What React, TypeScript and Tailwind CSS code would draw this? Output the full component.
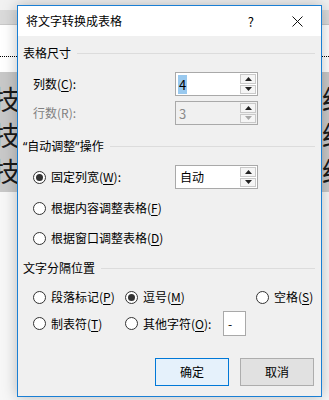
import React from 'react';

const font = { fontFamily: '"Noto Sans CJK SC", "Noto Sans", sans-serif' };

function U({ children }: { children: React.ReactNode }) {
  return <span className="underline underline-offset-2">{children}</span>;
}

function Radio({ checked }: { checked?: boolean }) {
  return (
    <span className="flex h-[13px] w-[13px] shrink-0 items-center justify-center rounded-full border border-[#333] bg-white">
      {checked && <span className="h-[7px] w-[7px] rounded-full bg-[#333]" />}
    </span>
  );
}

function SectionHeader({ children }: { children: React.ReactNode }) {
  return (
    <div className="flex h-4 items-center pl-[5px] pr-[6px]">
      <span className="whitespace-nowrap">{children}</span>
      <span className="ml-[6px] h-px flex-1 bg-[#dcdcdc]" />
    </div>
  );
}

function Arrow({ up, gray }: { up?: boolean; gray?: boolean }) {
  return (
    <svg width="7" height="4" viewBox="0 0 7 4">
      <path d={up ? 'M0 4 L3.5 0 L7 4 Z' : 'M0 0 L3.5 4 L7 0 Z'} fill={gray ? '#a8a8a8' : '#222'} />
    </svg>
  );
}

function Spin({ children, disabled }: { children: React.ReactNode; disabled?: boolean }) {
  return (
    <div
      className={`ml-auto mr-[63px] flex h-6 w-[83px] border border-[#a9a9a9] ${
        disabled ? 'bg-[#f0f0f0]' : 'bg-white'
      }`}>
      <div className="flex flex-1 items-center pl-[2px]">{children}</div>
      <div className="my-px mr-px flex w-4 flex-col gap-px">
        <div className="flex flex-1 items-center justify-center border border-[#c9c9c9] bg-[#f5f5f5]">
          <Arrow up />
        </div>
        <div className="flex flex-1 items-center justify-center border border-[#c9c9c9] bg-[#f5f5f5]">
          <Arrow gray={disabled} />
        </div>
      </div>
    </div>
  );
}

export default function App() {
  const rows = [0, 1, 2];
  return (
    <div className="relative h-[400px] w-[329px] overflow-hidden bg-[#f7f7f7]" style={font}>
      {/* document behind the dialog */}
      <div className="h-[10px] bg-[#f1f1f1]" />
      <div className="h-[15px] border-b border-[#c8c8c8] bg-[#dadada]" />
      <div className="h-[47px] bg-white pt-[31px]">
        <div className="border-b border-dotted border-black" />
      </div>
      <div className="h-[120px] overflow-hidden bg-[#c8c8c8] pt-[8px]">
        {rows.map((r) => (
          <div key={r} className="flex h-[36px] items-center justify-between text-[27px] leading-none text-[#1a1a1a]">
            <span className="-ml-[7px]">技</span>
            <span className="-mr-[20px]">经</span>
          </div>
        ))}
      </div>

      {/* dialog */}
      <div className="absolute left-[17px] top-[5px] flex h-[392px] w-[305px] flex-col border border-[#1a7fd4] bg-[#f0f0f0] text-[12px] leading-none text-black shadow-[0_0_14px_rgba(0,0,0,0.25)]">
        <div className="flex h-[30px] items-center bg-white pl-[8px]">
          <span className="text-[12px]">将文字转换成表格</span>
          <span className="ml-auto mr-[38px] text-[13px]">?</span>
          <svg width="11" height="11" viewBox="0 0 11 11" className="mr-[18px]">
            <path d="M0.5 0.5 L10.5 10.5 M10.5 0.5 L0.5 10.5" stroke="#111" strokeWidth="1" />
          </svg>
        </div>

        <div className="mt-[9px]">
          <SectionHeader>表格尺寸</SectionHeader>
        </div>

        <div className="mt-[11px] flex items-center pl-[15px]">
          <span>
            列数(<U>C</U>):
          </span>
          <Spin>
            <span className="bg-[#99c9ef] px-px py-[3px] text-[13px]">4</span>
          </Spin>
        </div>

        <div className="mt-[5px] flex items-center pl-[15px] text-[#808080]">
          <span>行数(R):</span>
          <Spin disabled>
            <span className="px-px text-[13px] text-[#8a8a8a]">3</span>
          </Spin>
        </div>

        <div className="mt-[13px]">
          <SectionHeader>
            <span className="font-['Noto_Sans']">“</span>自动调整<span className="font-['Noto_Sans']">”</span>操作
          </SectionHeader>
        </div>

        <div className="mt-[11px] flex items-center pl-[15px]">
          <Radio checked />
          <span className="ml-[5px]">
            固定列宽(<U>W</U>):
          </span>
          <Spin>
            <span className="px-[2px]">自动</span>
          </Spin>
        </div>

        <div className="mt-[9px] flex h-5 items-center pl-[15px]">
          <Radio />
          <span className="ml-[5px]">
            根据内容调整表格(<U>F</U>)
          </span>
        </div>

        <div className="mt-[10px] flex h-5 items-center pl-[15px]">
          <Radio />
          <span className="ml-[5px]">
            根据窗口调整表格(<U>D</U>)
          </span>
        </div>

        <div className="mt-[12px]">
          <SectionHeader>文字分隔位置</SectionHeader>
        </div>

        <div className="mt-[11px] flex h-5 items-center pl-[15px]">
          <div className="flex w-[92px] items-center">
            <Radio />
            <span className="ml-[5px]">
              段落标记(<U>P</U>)
            </span>
          </div>
          <div className="flex w-[131px] items-center">
            <Radio checked />
            <span className="ml-[5px]">
              逗号(<U>M</U>)
            </span>
          </div>
          <div className="flex items-center">
            <Radio />
            <span className="ml-[5px]">
              空格(<U>S</U>)
            </span>
          </div>
        </div>

        <div className="mt-[4px] flex h-[25px] items-center pl-[15px]">
          <div className="flex w-[92px] items-center">
            <Radio />
            <span className="ml-[5px]">
              制表符(<U>T</U>)
            </span>
          </div>
          <div className="flex items-center">
            <Radio />
            <span className="ml-[5px]">
              其他字符(<U>O</U>):
            </span>
          </div>
          <div className="ml-auto mr-[75px] flex h-[25px] w-[23px] items-center border border-[#a9a9a9] bg-white pl-[4px]">
            -
          </div>
        </div>

        <div className="mt-[22px] flex justify-end gap-[11px] pr-[7px]">
          <button className="h-[28px] w-[74px] border border-[#0078d7] bg-[#e5f1fb] text-[12px]">确定</button>
          <button className="h-[28px] w-[74px] border border-[#adadad] bg-[#e1e1e1] text-[12px]">取消</button>
        </div>
      </div>
    </div>
  );
}
